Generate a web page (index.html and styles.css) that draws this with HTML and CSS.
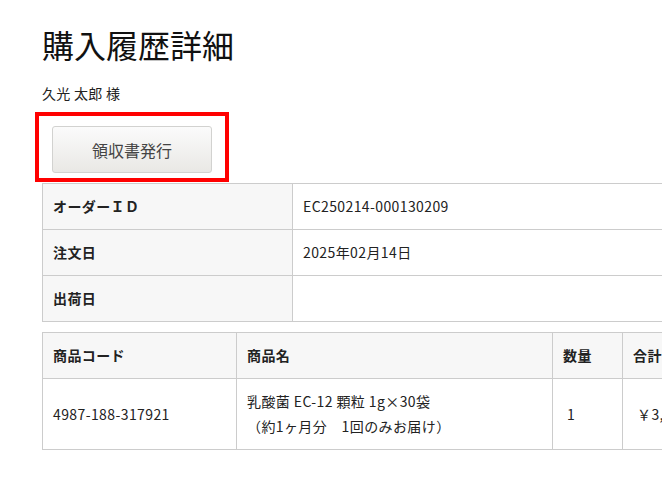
FILE: index.html
```html
<!DOCTYPE html>
<html lang="ja">
<head>
<meta charset="utf-8">
<title>購入履歴詳細</title>
<link rel="stylesheet" href="styles.css">
</head>
<body>
<main class="page">
  <h1 class="title">購入履歴詳細</h1>
  <p class="customer">久光 太郎 様</p>
  <div class="receipt-box">
    <button class="receipt-btn" type="button">領収書発行</button>
  </div>
  <table class="info-table">
    <tr>
      <th>オーダーＩＤ</th>
      <td>EC250214-000130209</td>
    </tr>
    <tr>
      <th>注文日</th>
      <td>2025年02月14日</td>
    </tr>
    <tr>
      <th>出荷日</th>
      <td></td>
    </tr>
  </table>
  <table class="items-table">
    <thead>
      <tr>
        <th class="col-code">商品コード</th>
        <th class="col-name">商品名</th>
        <th class="col-qty">数量</th>
        <th class="col-total">合計</th>
      </tr>
    </thead>
    <tbody>
      <tr>
        <td>4987-188-317921</td>
        <td>乳酸菌 EC-12 顆粒 1g×30袋<br>（約1ヶ月分　1回のみお届け）</td>
        <td class="num">1</td>
        <td class="num">￥3,240</td>
      </tr>
    </tbody>
  </table>
</main>
</body>
</html>
```
FILE: styles.css
```css
html, body {
  margin: 0;
  padding: 0;
  overflow: hidden;
  background: #fff;
}

body {
  font-family: "Noto Sans CJK JP", "Noto Sans", sans-serif;
  color: #222;
  width: 662px;
  height: 481px;
}

.page {
  padding-left: 42px;
}

.title {
  margin: 20px 0 0;
  font-size: 32px;
  line-height: 48px;
  font-weight: 400;
  color: #111;
}

.customer {
  margin: 13px 0 0;
  font-size: 14px;
  line-height: 25px;
  letter-spacing: 0.3px;
}

.receipt-box {
  margin: 6px 0 1px -7px;
  width: 160px;
  border: 4px solid #ff0000;
  padding: 10px 13px 5px;
  box-sizing: content-box;
}

.receipt-btn {
  display: block;
  width: 160px;
  height: 47px;
  border: 1px solid #d2d2d0;
  border-radius: 3px;
  background: linear-gradient(#fbfbfb, #e9e8e5);
  font-family: "Noto Sans CJK JP", sans-serif;
  font-size: 16px;
  color: #444;
  padding: 0;
  box-sizing: border-box;
}

table {
  border-collapse: collapse;
  font-size: 14px;
  line-height: 25px;
  letter-spacing: 0.4px;
  width: 760px;
}

th, td {
  border: 1px solid #cccccc;
  padding: 10px 10px;
  text-align: left;
  vertical-align: middle;
}

th {
  background: #f7f7f7;
  font-weight: 700;
}

.info-table th {
  width: 229px;
}

.items-table {
  margin-top: 10px;
}

.col-code { width: 173px; }
.col-name { width: 295px; }
.col-qty { width: 49px; }

.items-table td.num {
  padding-left: 14px;
}
```
